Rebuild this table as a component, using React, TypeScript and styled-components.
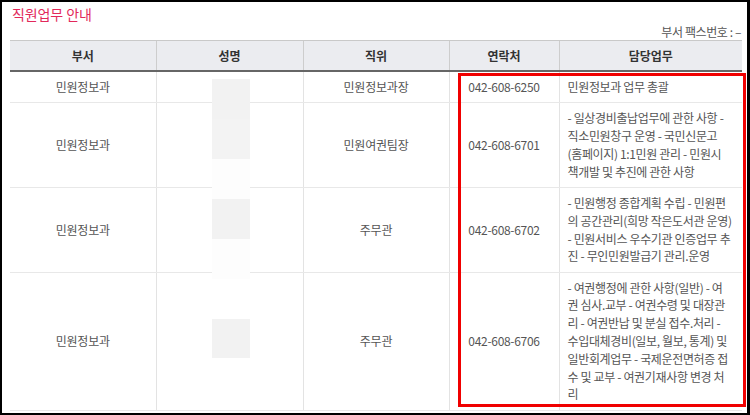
import styled, { createGlobalStyle } from "styled-components";

const GlobalStyle = createGlobalStyle`
  html, body {
    margin: 0;
    padding: 0;
    background: #ffffff;
  }
  body {
    font-family: "Noto Sans CJK KR", "Noto Sans", sans-serif;
  }
`;

type Row = {
  dept: string;
  position: string;
  phone: string;
  duties: string[];
};

const rows: Row[] = [
  {
    dept: "민원정보과",
    position: "민원정보과장",
    phone: "042-608-6250",
    duties: ["민원정보과 업무 총괄"]
  },
  {
    dept: "민원정보과",
    position: "민원여권팀장",
    phone: "042-608-6701",
    duties: [
      "- 일상경비출납업무에 관한 사항 -",
      "직소민원창구 운영 - 국민신문고",
      "(홈페이지) 1:1민원 관리 - 민원시",
      "책개발 및 추진에 관한 사항"
    ]
  },
  {
    dept: "민원정보과",
    position: "주무관",
    phone: "042-608-6702",
    duties: [
      "- 민원행정 종합계획 수립 - 민원편",
      "의 공간관리(희망 작은도서관 운영)",
      "- 민원서비스 우수기관 인증업무 추",
      "진 - 무인민원발급기 관리.운영"
    ]
  },
  {
    dept: "민원정보과",
    position: "주무관",
    phone: "042-608-6706",
    duties: [
      "- 여권행정에 관한 사항(일반) - 여",
      "권 심사.교부 - 여권수령 및 대장관",
      "리 - 여권반납 및 분실 접수.처리 -",
      "수입대체경비(일보, 월보, 통계) 및",
      "일반회계업무 - 국제운전면허증 접",
      "수 및 교부 - 여권기재사항 변경 처",
      "리"
    ]
  }
];

// blurred name photos that cover the 성명 column
const redactions = [
  { top: 39, height: 40, tone: "#f2f2f2" },
  { top: 79, height: 40, tone: "#f3f3f3" },
  { top: 119, height: 40, tone: "#fdfdfd" },
  { top: 159, height: 40, tone: "#f2f2f2" },
  { top: 199, height: 40, tone: "#fdfdfd" },
  { top: 279, height: 39, tone: "#f2f2f2" }
];

const App = () => {
  return (
    <>
      <GlobalStyle />
      <Frame>
        <Title>직원업무 안내</Title>
        <FaxLine>부서 팩스번호 : –</FaxLine>
        <TableWrap>
          <Table>
            <colgroup>
              <col style={{ width: 146 }} />
              <col style={{ width: 147 }} />
              <col style={{ width: 146 }} />
              <col style={{ width: 110 }} />
              <col style={{ width: 183 }} />
            </colgroup>
            <thead>
              <tr>
                <Th>부서</Th>
                <Th>성명</Th>
                <Th>직위</Th>
                <Th>연락처</Th>
                <Th>담당업무</Th>
              </tr>
            </thead>
            <tbody>
              {rows.map((row, i) => (
                <tr key={i}>
                  <Td>{row.dept}</Td>
                  <Td />
                  <Td>{row.position}</Td>
                  <PhoneTd>{row.phone}</PhoneTd>
                  <DutyTd>
                    {row.duties.map((line, j) => (
                      <DutyLine key={j}>{line}</DutyLine>
                    ))}
                  </DutyTd>
                </tr>
              ))}
            </tbody>
          </Table>

          {redactions.map((r, i) => (
            <Redaction key={i} $top={r.top} $height={r.height} $tone={r.tone} />
          ))}
          <Highlight />
        </TableWrap>
      </Frame>
    </>
  );
};

export default App;

const Frame = styled.div`
  position: relative;
  box-sizing: border-box;
  width: 750px;
  height: 415px;
  border: 2px solid #000000;
  border-right-width: 3px;
  padding: 2px 6px 0 8px;
  overflow: hidden;
  background: #ffffff;
`;

const Title = styled.h2`
  margin: 0;
  padding-left: 2px;
  font-size: 14px;
  font-weight: 400;
  line-height: 20px;
  letter-spacing: -0.1px;
  color: #e2285a;
`;

const FaxLine = styled.div`
  text-align: right;
  font-size: 12px;
  line-height: 16px;
  letter-spacing: -0.4px;
  color: #555555;
`;

const TableWrap = styled.div`
  position: relative;
`;

const Table = styled.table`
  width: 732px;
  table-layout: fixed;
  border-collapse: collapse;
  font-size: 12px;
  letter-spacing: -0.2px;
`;

const Th = styled.th`
  height: 29px;
  padding: 0;
  background: #ebecf0;
  border-top: 1px solid #c9c9c9;
  border-bottom: 2px solid #666666;
  border-left: 1px solid #cdcdcd;
  color: #333333;
  font-weight: 700;
  letter-spacing: 0;
  text-align: center;

  &:first-child {
    border-left: none;
  }
`;

const Td = styled.td`
  padding: 6px 8px 6.5px;
  line-height: 17.8px;
  border-bottom: 1px solid #e8e8e8;
  border-left: 1px solid #e3e3e3;
  color: #555555;
  text-align: center;
  vertical-align: middle;

  &:first-child {
    border-left: none;
  }
`;

const PhoneTd = styled(Td)`
  letter-spacing: -0.3px;
`;

const DutyTd = styled(Td)`
  text-align: left;
  letter-spacing: -0.35px;
`;

const DutyLine = styled.span`
  display: block;
  white-space: nowrap;
`;

const Redaction = styled.div<{ $top: number; $height: number; $tone: string }>`
  position: absolute;
  left: 202px;
  top: ${(p) => p.$top}px;
  width: 38px;
  height: ${(p) => p.$height}px;
  background: ${(p) => p.$tone};
`;

const Highlight = styled.div`
  position: absolute;
  left: 448px;
  top: 33px;
  width: 288px;
  height: 334px;
  box-sizing: border-box;
  border: 3px solid #f00000;
  pointer-events: none;
`;
